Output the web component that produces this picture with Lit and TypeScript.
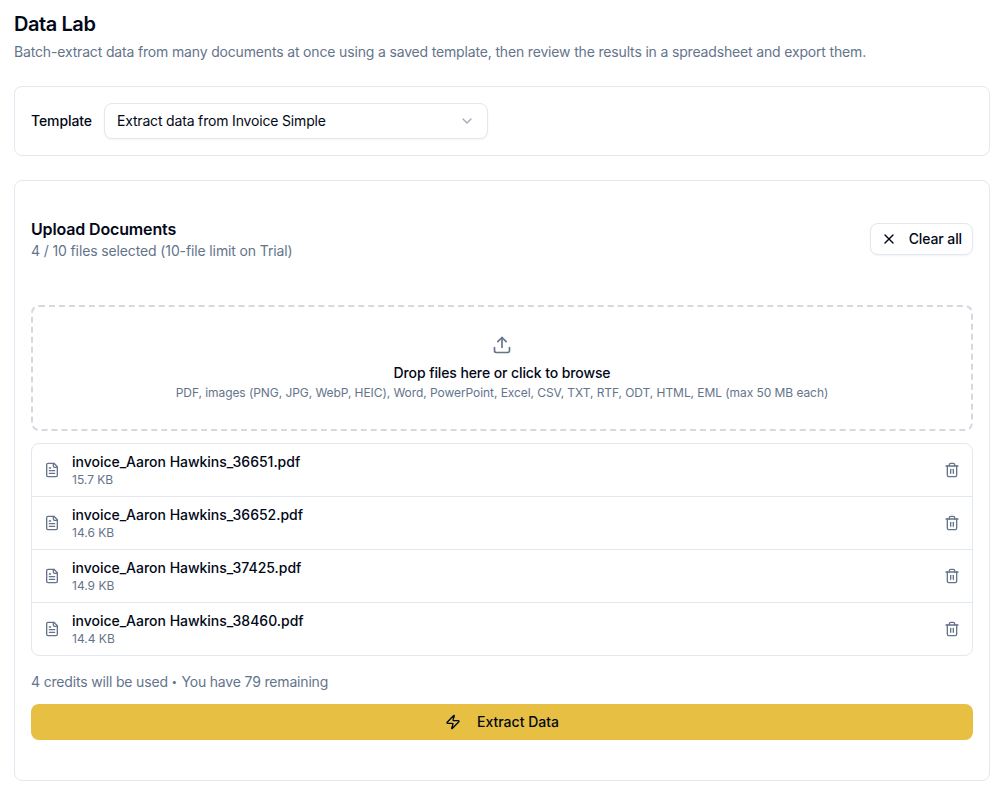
import { LitElement, html, css, svg } from "lit";
import { customElement } from "lit/decorators.js";

const icon = (size: number, body: unknown) => html`<svg width=${size} height=${size} viewBox="0 0 24 24" fill="none" stroke="currentColor" stroke-width="2" stroke-linecap="round" stroke-linejoin="round">${body}</svg>`;

const chevron = svg`<path d="m6 9 6 6 6-6"/>`;
const close = svg`<path d="M18 6 6 18"/><path d="m6 6 12 12"/>`;
const upload = svg`<path d="M21 15v4a2 2 0 0 1-2 2H5a2 2 0 0 1-2-2v-4"/><path d="m17 8-5-5-5 5"/><path d="M12 3v12"/>`;
const fileText = svg`<path d="M15 2H6a2 2 0 0 0-2 2v16a2 2 0 0 0 2 2h12a2 2 0 0 0 2-2V7Z"/><path d="M14 2v4a2 2 0 0 0 2 2h4"/><path d="M10 9H8"/><path d="M16 13H8"/><path d="M16 17H8"/>`;
const trash = svg`<path d="M3 6h18"/><path d="M19 6v14c0 1-1 2-2 2H7c-1 0-2-1-2-2V6"/><path d="M8 6V4c0-1 1-2 2-2h4c1 0 2 1 2 2v2"/><path d="M10 11v6"/><path d="M14 11v6"/>`;
const zap = svg`<path d="M4 14a1 1 0 0 1-.78-1.63l9.9-10.2a.5.5 0 0 1 .86.46l-1.92 6.02A1 1 0 0 0 13 10h7a1 1 0 0 1 .78 1.63l-9.9 10.2a.5.5 0 0 1-.86-.46l1.92-6.02A1 1 0 0 0 11 14z"/>`;

const files = [
  { name: "invoice_Aaron Hawkins_36651.pdf", size: "15.7 KB" },
  { name: "invoice_Aaron Hawkins_36652.pdf", size: "14.6 KB" },
  { name: "invoice_Aaron Hawkins_37425.pdf", size: "14.9 KB" },
  { name: "invoice_Aaron Hawkins_38460.pdf", size: "14.4 KB" },
];

@customElement("app-root")
export class AppRoot extends LitElement {
  static styles = css`
    :host { display: block; box-sizing: border-box; height: 797px; padding: 10px 15px 16px 14px; background: #fff; color: #020817; font: 14px/20px Inter, sans-serif; }
    * { box-sizing: border-box; margin: 0; }
    svg { display: block; flex: none; }
    button { font: inherit; font-weight: 500; color: inherit; display: flex; align-items: center; }
    h1 { font-size: 20px; line-height: 28px; font-weight: 600; letter-spacing: -0.43px; }
    .muted { color: #64748b; }
    .intro { margin-top: 4px; letter-spacing: -0.163px; }
    .card { border: 1px solid #e2e8f0; border-radius: 8px; padding: 16px; }
    .template { margin-top: 24px; height: 70px; display: flex; align-items: center; gap: 12px; }
    .label { font-weight: 500; letter-spacing: -0.1px; }
    .select { width: 384px; height: 36px; justify-content: space-between; padding: 0 12px; font-weight: 400; letter-spacing: -0.17px; border: 1px solid #e2e8f0; border-radius: 8px; background: #fff; box-shadow: 0 1px 2px rgb(0 0 0 / 0.05); }
    .chevron { color: #64748b; opacity: .6; }
    .upload { margin-top: 24px; height: 601px; padding-top: 36px; }
    .head { display: flex; align-items: center; justify-content: space-between; height: 44px; }
    h2 { font-size: 16px; line-height: 24px; font-weight: 600; letter-spacing: -0.15px; }
    .count { letter-spacing: -0.125px; }
    .clear { height: 32px; padding: 0 10px; gap: 12px; letter-spacing: -0.1px; border: 1px solid #e2e8f0; border-radius: 8px; background: #fff; box-shadow: 0 1px 2px rgb(0 0 0 / 0.05); }
    .drop { margin-top: 44px; height: 126px; border: 2px dashed #d5d8df; border-radius: 8px; display: flex; flex-direction: column; align-items: center; padding-top: 28px; }
    .drop-title { margin-top: 8px; font-weight: 500; letter-spacing: -0.1px; }
    .small { font-size: 12px; line-height: 16px; }
    .types { margin-top: 2px; letter-spacing: -0.065px; }
    .list { margin-top: 12px; border: 1px solid #e2e8f0; border-radius: 8px; }
    .row { height: 53px; display: flex; align-items: center; gap: 12px; padding: 0 12px; border-bottom: 1px solid #e2e8f0; }
    .row:last-child { border-bottom: 0; height: 52px; }
    .file { flex: 1; }
    .name { font-weight: 500; line-height: 20px; letter-spacing: -0.02px; }
    .credits { margin-top: 16px; height: 20px; letter-spacing: -0.17px; }
    .dot { font-size: 10px; line-height: 1; letter-spacing: 0.4px; vertical-align: 2px; }
    .extract { margin-top: 12px; width: 100%; height: 36px; justify-content: center; gap: 16px; border: 0; border-radius: 8px; background: #e6bf43; }
  `;

  render() {
    return html`
      <header><h1>Data Lab</h1>
      <p class="muted intro">Batch-extract data from many documents at once using a saved template, then review the results in a spreadsheet and export them.</p></header>
      <section class="card template">
        <span class="label">Template</span>
        <button class="select"><span>Extract data from Invoice Simple</span><span class="chevron">${icon(16, chevron)}</span></button>
      </section>
      <section class="card upload">
        <div class="head">
          <div><h2>Upload Documents</h2><p class="muted count">4 / 10 files selected (10-file limit on Trial)</p></div>
          <button class="clear">${icon(16, close)}<span>Clear all</span></button>
        </div>
        <div class="drop">
          <span class="muted">${icon(20, upload)}</span>
          <p class="drop-title">Drop files here or click to browse</p>
          <p class="muted small types">PDF, images (PNG, JPG, WebP, HEIC), Word, PowerPoint, Excel, CSV, TXT, RTF, ODT, HTML, EML (max 50 MB each)</p>
        </div>
        <div class="list">${files.map((f) => html`
          <div class="row">
            <span class="muted">${icon(16, fileText)}</span>
            <div class="file"><p class="name">${f.name}</p><p class="muted small">${f.size}</p></div>
            <span class="muted">${icon(16, trash)}</span>
          </div>`)}</div>
        <p class="muted credits">4 credits will be used <span class="dot">•</span> You have 79 remaining</p>
        <button class="extract">${icon(16, zap)}<span>Extract Data</span></button>
      </section>`;
  }
}
